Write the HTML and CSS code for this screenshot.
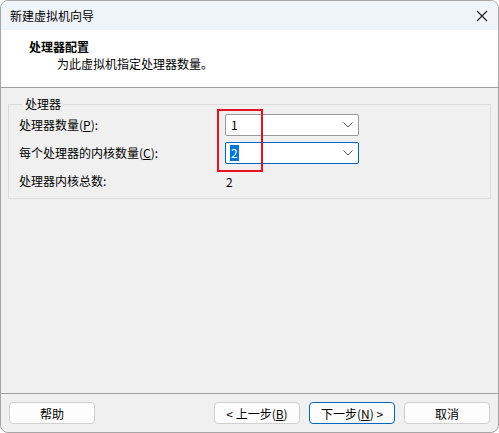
FILE: index.html
```html
<!DOCTYPE html>
<html lang="zh-CN">
<head>
    <meta charset="UTF-8">
    <title>新建虚拟机向导</title>
    <link rel="stylesheet" href="styles.css">
</head>
<body>
    <div class="wizard">
        <div class="titlebar">
            <span class="titlebar-text">新建虚拟机向导</span>
            <svg class="close-icon" width="12" height="12" viewBox="0 0 12 12">
                <path d="M1 1 L11 11 M11 1 L1 11" stroke="#1a1a1a" stroke-width="1.1" fill="none"/>
            </svg>
        </div>

        <div class="header">
            <div class="header-title">处理器配置</div>
            <div class="header-desc">为此虚拟机指定处理器数量。</div>
        </div>

        <div class="content">
            <fieldset class="group">
                <legend>处理器</legend>
                <div class="form-grid">
                    <label>处理器数量(<u>P</u>):</label>
                    <div class="combo">
                        <span class="combo-value">1</span>
                        <svg class="chevron" width="10" height="6" viewBox="0 0 10 6"><path d="M0.5 0.5 L5 5 L9.5 0.5" stroke="#555" fill="none"/></svg>
                    </div>

                    <label>每个处理器的内核数量(<u>C</u>):</label>
                    <div class="combo focused">
                        <span class="combo-value selected">2</span>
                        <svg class="chevron" width="10" height="6" viewBox="0 0 10 6"><path d="M0.5 0.5 L5 5 L9.5 0.5" stroke="#555" fill="none"/></svg>
                    </div>

                    <label>处理器内核总数:</label>
                    <span class="total">2</span>
                </div>
                <div class="highlight-box"></div>
            </fieldset>
        </div>

        <div class="footer">
            <button class="btn">帮助</button>
            <div class="nav-buttons">
                <button class="btn">&lt; 上一步(<u>B</u>)</button>
                <button class="btn primary">下一步(<u>N</u>) &gt;</button>
                <button class="btn cancel">取消</button>
            </div>
        </div>
    </div>
</body>
</html>
```

FILE: styles.css
```css
* {
    margin: 0;
    padding: 0;
    box-sizing: border-box;
}

body {
    font-family: "Noto Sans CJK SC", "Noto Sans", sans-serif;
    font-size: 12px;
    color: #000;
    background: #fff;
}

.wizard {
    width: 499px;
    height: 433px;
    display: flex;
    flex-direction: column;
    border: 1px solid #a6a6a6;
    border-radius: 8px;
    overflow: hidden;
    background: #f0f0f0;
}

.titlebar {
    height: 29px;
    background: #eff4f9;
    display: flex;
    align-items: center;
    justify-content: space-between;
    padding: 0 9px 0 9px;
}

.titlebar-text {
    line-height: 16px;
}

.close-icon {
    margin-right: 1px;
}

.header {
    height: 58px;
    background: #fff;
    border-bottom: 1px solid #a0a0a0;
    padding: 9px 0 0 28px;
}

.header-title {
    font-weight: bold;
    line-height: 16px;
}

.header-desc {
    margin: 1px 0 0 28px;
    line-height: 16px;
}

.content {
    flex: 1;
    padding: 8px 7px 0 7px;
}

.group {
    position: relative;
    border: 1px solid #dcdcdc;
    padding: 2px 10px 8px 10px;
    height: 103px;
}

.group legend {
    padding: 0 2px;
    margin-left: 4px;
    line-height: 16px;
}

.form-grid {
    display: grid;
    grid-template-columns: 206px 134px;
    grid-auto-rows: 22px;
    row-gap: 6px;
    align-items: center;
}

.form-grid label {
    line-height: 16px;
}

.combo {
    height: 22px;
    background: #fff;
    border: 1px solid #9a9a9a;
    border-radius: 2px;
    display: flex;
    align-items: center;
    justify-content: space-between;
    padding: 0 5px 0 4px;
}

.combo.focused {
    border-color: #0067c0;
}

.combo-value {
    line-height: 16px;
    padding: 0 1px;
}

.combo-value.selected {
    background: #0078d7;
    color: #fff;
}

.total {
    padding-left: 1px;
}

/* red marker around the two count fields */
.highlight-box {
    position: absolute;
    left: 208px;
    top: -3px;
    width: 46px;
    height: 63px;
    border: 2px solid #e81123;
}

.footer {
    height: 39px;
    border-top: 1px solid #a0a0a0;
    display: flex;
    justify-content: space-between;
    padding: 8px 8px 0 8px;
}

.nav-buttons {
    display: flex;
    gap: 9px;
}

.btn {
    width: 86px;
    height: 22px;
    font-family: inherit;
    font-size: 12px;
    color: #000;
    background: #fdfdfd;
    border: 1px solid #d0d0d0;
    border-radius: 4px;
}

.btn.primary {
    border-color: #0067c0;
}
```
